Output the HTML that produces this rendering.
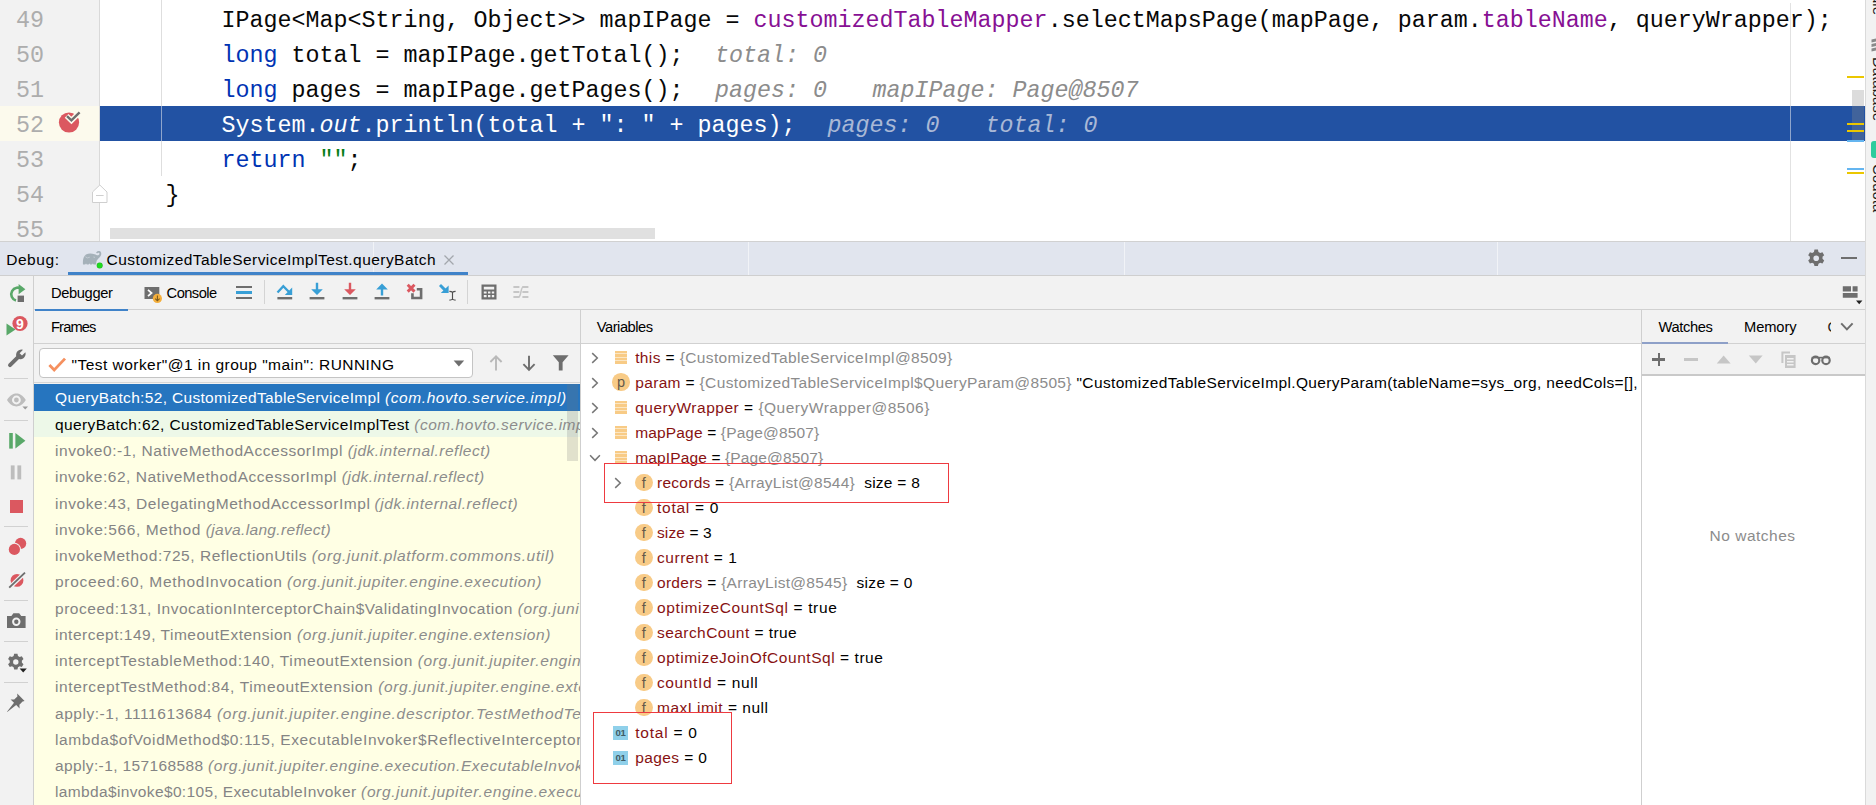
<!DOCTYPE html>
<html><head><meta charset="utf-8"><title>Debug</title>
<style>
html,body{margin:0;padding:0;background:#f2f2f2;}
body{width:1876px;height:805px;position:relative;overflow:hidden;font-family:'Liberation Sans', sans-serif;}
.a{position:absolute;box-sizing:border-box;}
svg.a{overflow:visible;}
</style></head><body>
<div class="a" style="left:0px;top:0px;width:1865px;height:241px;background:#fff;"></div><div class="a" style="left:0px;top:0px;width:99px;height:241px;background:#f2f2f2;"></div><div class="a" style="left:99px;top:0px;width:1px;height:241px;background:#d9d9d9;"></div><div class="a" style="left:0px;top:106px;width:99px;height:35px;background:#fcfaed;"></div><div class="a" style="left:100px;top:106px;width:1765px;height:35px;background:#2252a3;"></div><div class="a" style="left:161px;top:0px;width:1px;height:176px;background:#dedede;"></div><div class="a" style="left:161px;top:106px;width:1px;height:35px;background:#8fa5cc;"></div><div class="a" style="left:1790px;top:3px;width:1px;height:238px;background:#e2e2e2;"></div><div class="a" style="left:1790px;top:106px;width:1px;height:35px;background:#8fa5cc;"></div><div id="t0" style="position:absolute;left:16.00px;top:3.50px;height:35px;line-height:35px;font-family:'Liberation Mono';font-size:23.33px;letter-spacing:0.000px;white-space:pre;color:#adadad;">49</div><div id="t1" style="position:absolute;left:16.00px;top:38.50px;height:35px;line-height:35px;font-family:'Liberation Mono';font-size:23.33px;letter-spacing:0.000px;white-space:pre;color:#adadad;">50</div><div id="t2" style="position:absolute;left:16.00px;top:73.50px;height:35px;line-height:35px;font-family:'Liberation Mono';font-size:23.33px;letter-spacing:0.000px;white-space:pre;color:#adadad;">51</div><div id="t3" style="position:absolute;left:16.00px;top:108.50px;height:35px;line-height:35px;font-family:'Liberation Mono';font-size:23.33px;letter-spacing:0.000px;white-space:pre;color:#adadad;">52</div><div id="t4" style="position:absolute;left:16.00px;top:143.50px;height:35px;line-height:35px;font-family:'Liberation Mono';font-size:23.33px;letter-spacing:0.000px;white-space:pre;color:#adadad;">53</div><div id="t5" style="position:absolute;left:16.00px;top:178.50px;height:35px;line-height:35px;font-family:'Liberation Mono';font-size:23.33px;letter-spacing:0.000px;white-space:pre;color:#adadad;">54</div><div id="t6" style="position:absolute;left:16.00px;top:213.50px;height:35px;line-height:35px;font-family:'Liberation Mono';font-size:23.33px;letter-spacing:0.000px;white-space:pre;color:#adadad;">55</div><div id="t7" style="position:absolute;left:221.60px;top:3.50px;height:35px;line-height:35px;font-family:'Liberation Mono';font-size:23.33px;letter-spacing:0.001px;white-space:pre;color:#080808;">IPage&lt;Map&lt;String, Object&gt;&gt; mapIPage = <span style="color:#871094">customizedTableMapper</span>.selectMapsPage(mapPage, param.<span style="color:#871094">tableName</span>, queryWrapper);</div><div id="t8" style="position:absolute;left:221.60px;top:38.50px;height:35px;line-height:35px;font-family:'Liberation Mono';font-size:23.33px;letter-spacing:0.000px;white-space:pre;color:#080808;"><span style="color:#0033b3">long</span> total = mapIPage.getTotal();</div><div id="t9" style="position:absolute;left:715.00px;top:38.50px;height:35px;line-height:35px;font-family:'Liberation Mono';font-size:23.33px;letter-spacing:0.000px;white-space:pre;"><span style="color:#8c8c8c;font-style:italic">total: 0</span></div><div id="t10" style="position:absolute;left:221.60px;top:73.50px;height:35px;line-height:35px;font-family:'Liberation Mono';font-size:23.33px;letter-spacing:0.000px;white-space:pre;color:#080808;"><span style="color:#0033b3">long</span> pages = mapIPage.getPages();</div><div id="t11" style="position:absolute;left:715.00px;top:73.50px;height:35px;line-height:35px;font-family:'Liberation Mono';font-size:23.33px;letter-spacing:0.000px;white-space:pre;"><span style="color:#8c8c8c;font-style:italic">pages: 0</span></div><div id="t12" style="position:absolute;left:872.50px;top:73.50px;height:35px;line-height:35px;font-family:'Liberation Mono';font-size:23.33px;letter-spacing:0.001px;white-space:pre;"><span style="color:#8c8c8c;font-style:italic">mapIPage: Page@8507</span></div><div id="t13" style="position:absolute;left:221.60px;top:108.50px;height:35px;line-height:35px;font-family:'Liberation Mono';font-size:23.33px;letter-spacing:0.000px;white-space:pre;color:#fff;">System.<span style="font-style:italic">out</span>.println(total + ": " + pages);</div><div id="t14" style="position:absolute;left:827.50px;top:108.50px;height:35px;line-height:35px;font-family:'Liberation Mono';font-size:23.33px;letter-spacing:0.000px;white-space:pre;"><span style="color:#a9b8d6;font-style:italic">pages: 0</span></div><div id="t15" style="position:absolute;left:985.50px;top:108.50px;height:35px;line-height:35px;font-family:'Liberation Mono';font-size:23.33px;letter-spacing:0.000px;white-space:pre;"><span style="color:#a9b8d6;font-style:italic">total: 0</span></div><div id="t16" style="position:absolute;left:221.60px;top:143.50px;height:35px;line-height:35px;font-family:'Liberation Mono';font-size:23.33px;letter-spacing:0.000px;white-space:pre;color:#080808;"><span style="color:#0033b3">return</span> <span style="color:#067d17">""</span>;</div><div id="t17" style="position:absolute;left:165.60px;top:178.50px;height:35px;line-height:35px;font-family:'Liberation Mono';font-size:23.33px;letter-spacing:0.000px;white-space:pre;color:#080808;">}</div><svg class="a" style="left:56px;top:109px;" width="28" height="28" viewBox="0 0 28 28"><circle cx="13" cy="13.5" r="10.1" fill="#db5860"/><path d="M10.6 6.9 L15.4 11.4 L24.2 2.8" fill="none" stroke="#fcfaed" stroke-width="5.4"/><path d="M11 7.2 L15.4 11.3 L23.6 3.4" fill="none" stroke="#6e6e6e" stroke-width="2.4"/></svg><svg class="a" style="left:90px;top:183px;" width="20" height="22" viewBox="0 0 20 22"><path d="M2.5 19.5 V9 L9.8 2 L17 9 V19.5 Z" fill="#fff" stroke="#cfcfcf" stroke-width="1"/><path d="M6 12.5 H13.6" stroke="#cfcfcf" stroke-width="1"/></svg><div class="a" style="left:110px;top:228px;width:545px;height:10.6px;background:#e0e0e0;"></div><div class="a" style="left:1847px;top:76px;width:17px;height:2px;background:#ebc700;"></div><div class="a" style="left:1852px;top:90px;width:12px;height:51px;background:rgba(140,140,140,0.30);"></div><div class="a" style="left:1847px;top:123px;width:17px;height:2px;background:#ebc700;"></div><div class="a" style="left:1847px;top:130px;width:17px;height:2px;background:#ebc700;"></div><div class="a" style="left:1847px;top:140px;width:17px;height:2px;background:#64b5f0;"></div><div class="a" style="left:1847px;top:168px;width:17px;height:2px;background:#64b5f0;"></div><div class="a" style="left:1847px;top:172px;width:17px;height:2px;background:#ebc700;"></div><div class="a" style="left:0px;top:241px;width:1865px;height:1px;background:#d1d1d1;"></div><div class="a" style="left:1865px;top:0px;width:11px;height:805px;background:#f2f2f2;"></div><div class="a" style="left:1865px;top:0px;width:1px;height:805px;background:#dadada;"></div><div class="a" style="left:1870.9px;top:-30px;transform-origin:0 0;transform:rotate(90deg) translate(0,-100%);font:15px 'Liberation Sans', sans-serif;color:#1a1a1a;white-space:pre;line-height:15px;height:15px">Gradle</div><div class="a" style="left:1870.9px;top:57px;transform-origin:0 0;transform:rotate(90deg) translate(0,-100%);font:15px 'Liberation Sans', sans-serif;color:#1a1a1a;white-space:pre;line-height:15px;height:15px">Database</div><div class="a" style="left:1870.9px;top:164px;transform-origin:0 0;transform:rotate(90deg) translate(0,-100%);font:15px 'Liberation Sans', sans-serif;color:#1a1a1a;white-space:pre;line-height:15px;height:15px">Codota</div><svg class="a" style="left:1870px;top:38px;overflow:hidden;" width="6" height="15" viewBox="0 0 6 15"><path d="M1.5 1.5 l4.5 -1 v3 l-4.5 1z M1.5 6 l4.5 -1 v3 l-4.5 1z M1.5 10.5 l4.5 -1 v3 l-4.5 1z" fill="#8a8a8a"/></svg><svg class="a" style="left:1870px;top:141px;overflow:hidden;" width="6" height="17" viewBox="0 0 6 17"><rect x="1" y="0" width="14" height="17" rx="3" fill="#2ecc9d"/></svg><div class="a" style="left:0px;top:242px;width:1865px;height:34px;background:#e1e5ee;"></div><div class="a" style="left:373px;top:242px;width:1px;height:33px;background:rgba(255,255,255,0.55);"></div><div class="a" style="left:748px;top:242px;width:1px;height:33px;background:rgba(255,255,255,0.55);"></div><div class="a" style="left:1124px;top:242px;width:1px;height:33px;background:rgba(255,255,255,0.55);"></div><div class="a" style="left:1497px;top:242px;width:1px;height:33px;background:rgba(255,255,255,0.55);"></div><div id="t18" style="position:absolute;left:6.20px;top:246.50px;height:26px;line-height:26px;font-family:'Liberation Sans', sans-serif;font-size:15.5px;letter-spacing:0.553px;white-space:pre;color:#000;">Debug:</div><svg class="a" style="left:82px;top:247px;" width="24" height="24" viewBox="0 0 24 24"><path d="M1 17.6 C0.6 13 1.2 9.5 4 7.4 C6.5 6 10 6.2 12.5 7.2 C14.2 7.8 15.6 8.6 16.6 8 C17.6 7.4 17.8 6.2 16.8 5.8 C16 5.6 15.4 5.9 15.2 6.4 L14.1 5.7 C14.6 4.4 16 3.7 17.4 4 C19.4 4.5 19.8 7 18.6 9 C17.6 10.8 15.6 12 14.8 13.6 C14.3 14.8 14.2 16 14.2 17.6 L11.6 17.6 L10.8 16.5 L10 17.6 L8.2 17.6 L7.4 16.5 L6.6 17.6 L4.8 17.6 L4 16.5 L3.2 17.6 Z" fill="#a5b1b9"/><path d="M3.4 9.8 Q5.2 11.8 7.8 10.2 M11.4 10 L13 10.4" stroke="#c9d1d8" stroke-width="0.8" fill="none"/><circle cx="17.7" cy="18.6" r="3" fill="#27b327"/><circle cx="17.7" cy="18.6" r="2.5" fill="#1fdb1f"/></svg><div id="t19" style="position:absolute;left:106.50px;top:246.50px;height:26px;line-height:26px;font-family:'Liberation Sans', sans-serif;font-size:15.5px;letter-spacing:0.451px;white-space:pre;color:#000;">CustomizedTableServiceImplTest.queryBatch</div><svg class="a" style="left:443px;top:254px;" width="12" height="12" viewBox="0 0 12 12"><path d="M1.5 1.5 L10.5 10.5 M10.5 1.5 L1.5 10.5" stroke="#a3a7ad" stroke-width="1.3" fill="none"/></svg><div class="a" style="left:68px;top:272px;width:400px;height:3px;background:#4083c9;"></div><svg class="a" style="left:1806px;top:248px;" width="20" height="20" viewBox="0 0 20 20"><g transform="translate(10.2,10.2) scale(1.08)" fill="#6e6e6e"><path d="M-1.6 -8 h3.2 l.5 2.2 a6 6 0 0 1 1.6 .9 l2.1 -.7 1.6 2.8 -1.6 1.5 a6 6 0 0 1 0 1.9 l1.6 1.5 -1.6 2.8 -2.1 -.7 a6 6 0 0 1 -1.6 .9 l-.5 2.2 h-3.2 l-.5 -2.2 a6 6 0 0 1 -1.6 -.9 l-2.1 .7 -1.6 -2.8 1.6 -1.5 a6 6 0 0 1 0 -1.9 l-1.6 -1.5 1.6 -2.8 2.1 .7 a6 6 0 0 1 1.6 -.9 z M0 -2.6 a2.6 2.6 0 1 0 0 5.2 a2.6 2.6 0 1 0 0 -5.2z" fill-rule="evenodd"/></g></svg><div class="a" style="left:1841.4px;top:257px;width:15.2px;height:2.2px;background:#6e6e6e;"></div><div class="a" style="left:0px;top:275px;width:1865px;height:1px;background:#cfcfcf;"></div><div class="a" style="left:0px;top:276px;width:1865px;height:529px;background:#f2f2f2;"></div><div class="a" style="left:34px;top:309px;width:1831px;height:1px;background:#d1d1d1;"></div><div id="t20" style="position:absolute;left:51.00px;top:280.00px;height:26px;line-height:26px;font-family:'Liberation Sans', sans-serif;font-size:14.7px;letter-spacing:-0.377px;white-space:pre;color:#000;">Debugger</div><div class="a" style="left:35px;top:309px;width:93px;height:2px;background:#4083c9;"></div><svg class="a" style="left:143px;top:284px;" width="22" height="22" viewBox="0 0 22 22"><rect x="1.5" y="3" width="14.8" height="12" fill="#6e6e6e"/><path d="M5 5.8 L8.6 9 L5 12.2" stroke="#fff" stroke-width="1.7" fill="none"/><circle cx="14.4" cy="14.4" r="4.6" fill="#f4af3d"/><path d="M14.4 11.6 V16.6 M12.2 14.6 L14.4 16.8 L16.6 14.6" stroke="#7a5a1c" stroke-width="1.1" fill="none"/></svg><div id="t21" style="position:absolute;left:166.60px;top:280.00px;height:26px;line-height:26px;font-family:'Liberation Sans', sans-serif;font-size:14.7px;letter-spacing:-0.556px;white-space:pre;color:#000;">Console</div><div class="a" style="left:236px;top:286px;width:16px;height:2.4px;background:#6e6e6e;"></div><div class="a" style="left:236px;top:291px;width:16px;height:3.4px;background:#389fd6;"></div><div class="a" style="left:236px;top:297px;width:16px;height:2.4px;background:#6e6e6e;"></div><div class="a" style="left:264px;top:280px;width:1px;height:24px;background:#d4d4d4;"></div><svg class="a" style="left:275px;top:282px;" width="20" height="20" viewBox="0 0 20 20"><path d="M2.5 10.5 L8.3 4.2 L15 11" stroke="#389fd6" stroke-width="2.3" fill="none"/><path d="M17.2 5.6 V13 H9.8 Z" fill="#389fd6"/><rect x="2.4" y="15" width="14.8" height="2.4" fill="#6e6e6e"/></svg><svg class="a" style="left:307px;top:282px;" width="20" height="20" viewBox="0 0 20 20"><path d="M8.8 0.8 H11.2 V7.2 H15.8 L10 13 L4.2 7.2 H8.8 Z" fill="#389fd6"/><rect x="2.6" y="15" width="14.8" height="2.4" fill="#6e6e6e"/></svg><svg class="a" style="left:340px;top:282px;" width="20" height="20" viewBox="0 0 20 20"><path d="M8.8 0.8 H11.2 V7.2 H15.8 L10 13 L4.2 7.2 H8.8 Z" fill="#db5860"/><rect x="2.6" y="15" width="14.8" height="2.4" fill="#6e6e6e"/></svg><svg class="a" style="left:372px;top:282px;" width="20" height="20" viewBox="0 0 20 20"><path d="M8.8 13.4 H11.2 V7.4 H15.8 L10 1.4 L4.2 7.4 H8.8 Z" fill="#389fd6"/><rect x="2.6" y="15" width="14.8" height="2.4" fill="#6e6e6e"/></svg><svg class="a" style="left:405px;top:282px;" width="20" height="20" viewBox="0 0 20 20"><path d="M2.7 2.8 L9.5 9.6 M9.5 2.8 L2.7 9.6" stroke="#db5860" stroke-width="2.9" fill="none"/><path d="M11.8 7.3 H16.1 V16 H7.45 V11.3" stroke="#6e6e6e" stroke-width="2.6" fill="none"/></svg><svg class="a" style="left:438px;top:282px;" width="20" height="20" viewBox="0 0 20 20"><path d="M10.6 3.4 V11 H2.8 Z" fill="#389fd6"/><path d="M2 3 L7.6 8.6" stroke="#389fd6" stroke-width="2.9"/><path d="M11.4 9.3 Q13.6 9.3 14.5 10.4 Q15.4 9.3 17.6 9.3 M11.4 18.1 Q13.6 18.1 14.5 17 Q15.4 18.1 17.6 18.1 M14.5 10.2 V17.2" stroke="#4f4f4f" stroke-width="1.15" fill="none"/></svg><div class="a" style="left:467px;top:280px;width:1px;height:24px;background:#d4d4d4;"></div><svg class="a" style="left:480px;top:283px;" width="18" height="18" viewBox="0 0 18 18"><path d="M1.5 1.5 H16.5 V16.5 H1.5 Z M3.8 3.8 V6.6 H14.2 V3.8 Z M3.8 8.4 V10.6 H6.6 V8.4 Z M8 8.4 V10.6 H10.4 V8.4 Z M11.8 8.4 V10.6 H14.2 V8.4 Z M3.8 12 V14.2 H6.6 V12 Z M8 12 V14.2 H10.4 V12 Z M11.8 12 V14.2 H14.2 V12 Z" fill="#6e6e6e" fill-rule="evenodd"/></svg><svg class="a" style="left:512px;top:283px;" width="18" height="18" viewBox="0 0 18 18"><path d="M1.4 4 H7.4 M10.4 4 H16.4 M1.4 9 H7.4 M10.4 9 H16.4 M1.4 14 H7.4 M10.4 14 H16.4" stroke="#c6c6c6" stroke-width="2" fill="none"/><path d="M6.6 14 C9.2 14 8.6 4 11.2 4" stroke="#c6c6c6" stroke-width="1.5" fill="none"/></svg><svg class="a" style="left:1842px;top:285px;" width="20" height="22" viewBox="0 0 20 22"><path d="M0.8 1.2 H9 V6.4 H0.8 Z M10.6 1.2 H15.6 V6.4 H10.6 Z M0.8 8 H15.6 V12.8 H0.8 Z" fill="#6e6e6e"/><path d="M14 15.6 H20.4 L17.2 19.2 Z" fill="#222"/></svg><div class="a" style="left:33px;top:276px;width:1px;height:529px;background:#cfcfcf;"></div><svg class="a" style="left:6px;top:283px;" width="22" height="22" viewBox="0 0 22 22"><path d="M16.2 6.3 A6.6 6.6 0 1 0 10 17.6" stroke="#59a869" stroke-width="2.6" fill="none" transform="translate(0,0)"/><path d="M12.6 1 L19.4 6.2 L12.6 11.2 Z" fill="#59a869"/><rect x="11.6" y="12.6" width="6.4" height="6.4" fill="#6e6e6e"/></svg><svg class="a" style="left:5px;top:314px;" width="24" height="24" viewBox="0 0 24 24"><path d="M1.5 9.5 L10.5 15.5 L1.5 21.5 Z" fill="#59a869"/><circle cx="15" cy="9.5" r="7.6" fill="#db5860"/><text x="15" y="14.6" font-family="Liberation Sans" font-weight="bold" font-size="14" fill="#fff" text-anchor="middle">9</text></svg><svg class="a" style="left:7px;top:348px;" width="20" height="20" viewBox="0 0 20 20"><path d="M18.4 4.2 L15 7.6 L12.6 5.2 L16 1.8 A5.4 5.4 0 0 0 9.2 8.2 L1.6 15.8 A1.9 1.9 0 0 0 4.4 18.6 L12 11 A5.4 5.4 0 0 0 18.4 4.2 Z" fill="#6e6e6e"/></svg><div class="a" style="left:4px;top:378px;width:24px;height:1px;background:#d1d1d1;"></div><svg class="a" style="left:6px;top:391px;" width="24" height="20" viewBox="0 0 24 20"><path d="M1 9 C4 4.2 7.4 2.6 10.4 2.6 C13.4 2.6 16.8 4.2 19.8 9 C16.8 13.8 13.4 15.4 10.4 15.4 C7.4 15.4 4 13.8 1 9 Z M10.4 4.6 A4.4 4.4 0 1 0 10.4 13.4 A4.4 4.4 0 1 0 10.4 4.6 Z" fill="#bdbdbd" fill-rule="evenodd"/><circle cx="10.4" cy="9" r="2.4" fill="#bdbdbd"/><path d="M16.4 15.6 H22 L19.2 18.6 Z" fill="#9a9a9a"/></svg><div class="a" style="left:4px;top:420px;width:24px;height:1px;background:#d1d1d1;"></div><svg class="a" style="left:7px;top:431px;" width="20" height="20" viewBox="0 0 20 20"><rect x="2.2" y="2" width="3.6" height="15.6" fill="#59a869"/><path d="M8.4 2 L18.4 9.8 L8.4 17.6 Z" fill="#59a869"/></svg><svg class="a" style="left:7px;top:463px;" width="20" height="20" viewBox="0 0 20 20"><rect x="3.8" y="2.4" width="3.8" height="14" fill="#bdbdbd"/><rect x="10.4" y="2.4" width="3.8" height="14" fill="#bdbdbd"/></svg><div class="a" style="left:10px;top:500px;width:13px;height:13px;background:#db5860;"></div><div class="a" style="left:4px;top:526px;width:24px;height:1px;background:#d1d1d1;"></div><svg class="a" style="left:6px;top:536px;" width="22" height="22" viewBox="0 0 22 22"><circle cx="14.6" cy="7.4" r="5.6" fill="#db5860"/><circle cx="8.4" cy="13.4" r="6.6" fill="#f2f2f2"/><circle cx="8.4" cy="13.4" r="5.6" fill="#db5860"/></svg><svg class="a" style="left:6px;top:569px;" width="22" height="22" viewBox="0 0 22 22"><circle cx="11" cy="11.4" r="6.4" fill="#db5860"/><path d="M3 19 L19.4 3.4" stroke="#f2f2f2" stroke-width="4.4"/><path d="M3.2 18.6 L19 3.6" stroke="#6e6e6e" stroke-width="1.9"/></svg><div class="a" style="left:4px;top:600px;width:24px;height:1px;background:#d1d1d1;"></div><svg class="a" style="left:6px;top:611px;" width="22" height="20" viewBox="0 0 22 20"><path d="M1 5 H5.4 L7.4 2.2 H13.2 L15.2 5 H19.6 V17 H1 Z M10.3 6.6 A4.2 4.2 0 1 0 10.3 15 A4.2 4.2 0 1 0 10.3 6.6 Z M10.3 8.6 A2.2 2.2 0 1 1 10.3 13 A2.2 2.2 0 1 1 10.3 8.6 Z" fill="#6e6e6e" fill-rule="evenodd"/></svg><div class="a" style="left:4px;top:641px;width:24px;height:1px;background:#d1d1d1;"></div><svg class="a" style="left:5px;top:652px;" width="24" height="22" viewBox="0 0 24 22"><g transform="translate(10.8,10) scale(1.04)" fill="#6e6e6e"><path d="M-1.6 -8 h3.2 l.5 2.2 a6 6 0 0 1 1.6 .9 l2.1 -.7 1.6 2.8 -1.6 1.5 a6 6 0 0 1 0 1.9 l1.6 1.5 -1.6 2.8 -2.1 -.7 a6 6 0 0 1 -1.6 .9 l-.5 2.2 h-3.2 l-.5 -2.2 a6 6 0 0 1 -1.6 -.9 l-2.1 .7 -1.6 -2.8 1.6 -1.5 a6 6 0 0 1 0 -1.9 l-1.6 -1.5 1.6 -2.8 2.1 .7 a6 6 0 0 1 1.6 -.9 z M0 -2.6 a2.6 2.6 0 1 0 0 5.2 a2.6 2.6 0 1 0 0 -5.2z" fill-rule="evenodd"/></g><path d="M14.6 16.6 H21.8 L18.2 20.6 Z" fill="#222"/></svg><div class="a" style="left:4px;top:682px;width:24px;height:1px;background:#d1d1d1;"></div><svg class="a" style="left:5.4px;top:692px;" width="22" height="22" viewBox="0 0 22 22"><path d="M12.2 1.6 L19.6 9 L17.6 9.6 L14.4 12.8 L14.6 16.4 L11.2 13 L2.2 20 L2 19.8 L9 10.8 L5.6 7.4 L9.2 7.6 L12.4 4.4 Z" fill="#6e6e6e"/></svg><div id="t22" style="position:absolute;left:51.00px;top:314.00px;height:26px;line-height:26px;font-family:'Liberation Sans', sans-serif;font-size:14.7px;letter-spacing:-0.864px;white-space:pre;color:#000;">Frames</div><div class="a" style="left:34px;top:343px;width:547px;height:1px;background:#d1d1d1;"></div><div class="a" style="left:39px;top:348px;width:434px;height:30px;background:#fff;border:1px solid #c4c4c4;border-radius:4px"></div><svg class="a" style="left:47px;top:354px;" width="20" height="20" viewBox="0 0 20 20"><path d="M2.4 11 L7.2 16 L18 4.6" stroke="#f5905f" stroke-width="2.8" fill="none"/></svg><div id="t23" style="position:absolute;left:71.60px;top:351.50px;height:26px;line-height:26px;font-family:'Liberation Sans', sans-serif;font-size:15.5px;letter-spacing:0.453px;white-space:pre;color:#000;">"Test worker"@1 in group "main": RUNNING</div><svg class="a" style="left:453px;top:360px;" width="12" height="8" viewBox="0 0 12 8"><path d="M0.6 0.6 H11.2 L5.9 6.6 Z" fill="#6e6e6e"/></svg><svg class="a" style="left:488px;top:354px;" width="16" height="18" viewBox="0 0 16 18"><path d="M8 16.4 V2.6 M2.4 8 L8 2.4 L13.6 8" stroke="#b9b9b9" stroke-width="1.9" fill="none"/></svg><svg class="a" style="left:521px;top:354px;" width="16" height="18" viewBox="0 0 16 18"><path d="M8 1.8 V15.6 M2.4 10.2 L8 15.8 L13.6 10.2" stroke="#6e6e6e" stroke-width="1.9" fill="none"/></svg><svg class="a" style="left:552px;top:354px;" width="18" height="18" viewBox="0 0 18 18"><path d="M0.8 1.2 H16.6 L10.6 8.2 V16.4 H6.8 V8.2 Z" fill="#6e6e6e"/></svg><div class="a" style="left:34px;top:382px;width:547px;height:1px;background:#d6d6d6;"></div><div class="a" style="left:34px;top:384px;width:546px;height:421px;background:#ffffe4;"></div><div class="a" style="left:34px;top:384px;width:546px;height:27px;background:#2675bf;"></div><div class="a" style="left:34px;top:411px;width:546px;height:26px;background:#edf8e8;"></div><div class="a" style="left:34px;top:384px;width:546px;height:421px;overflow:hidden"><div id="t24" style="position:absolute;left:21.00px;top:1.43px;height:26px;line-height:26px;font-family:'Liberation Sans', sans-serif;font-size:15.5px;letter-spacing:0.327px;white-space:pre;color:#fff;">QueryBatch:52, CustomizedTableServiceImpl</div><div id="t25" style="position:absolute;left:351.00px;top:1.43px;height:26px;line-height:26px;font-family:'Liberation Sans', sans-serif;font-size:15.5px;letter-spacing:0.576px;white-space:pre;color:#fff;font-style:italic;">(com.hovto.service.impl)</div><div id="t26" style="position:absolute;left:21.00px;top:27.70px;height:26px;line-height:26px;font-family:'Liberation Sans', sans-serif;font-size:15.5px;letter-spacing:0.392px;white-space:pre;color:#000;">queryBatch:62, CustomizedTableServiceImplTest</div><div id="t27" style="position:absolute;left:380.20px;top:27.70px;height:26px;line-height:26px;font-family:'Liberation Sans', sans-serif;font-size:15.5px;letter-spacing:0.530px;white-space:pre;color:#8c8c8c;font-style:italic;">(com.hovto.service.impl)</div><div id="t28" style="position:absolute;left:21.00px;top:53.98px;height:26px;line-height:26px;font-family:'Liberation Sans', sans-serif;font-size:15.5px;letter-spacing:0.533px;white-space:pre;color:#848484;">invoke0:-1, NativeMethodAccessorImpl</div><div id="t29" style="position:absolute;left:313.80px;top:53.98px;height:26px;line-height:26px;font-family:'Liberation Sans', sans-serif;font-size:15.5px;letter-spacing:0.505px;white-space:pre;color:#8c8c8c;font-style:italic;">(jdk.internal.reflect)</div><div id="t30" style="position:absolute;left:21.00px;top:80.24px;height:26px;line-height:26px;font-family:'Liberation Sans', sans-serif;font-size:15.5px;letter-spacing:0.525px;white-space:pre;color:#848484;">invoke:62, NativeMethodAccessorImpl</div><div id="t31" style="position:absolute;left:307.80px;top:80.24px;height:26px;line-height:26px;font-family:'Liberation Sans', sans-serif;font-size:15.5px;letter-spacing:0.505px;white-space:pre;color:#8c8c8c;font-style:italic;">(jdk.internal.reflect)</div><div id="t32" style="position:absolute;left:21.00px;top:106.51px;height:26px;line-height:26px;font-family:'Liberation Sans', sans-serif;font-size:15.5px;letter-spacing:0.554px;white-space:pre;color:#848484;">invoke:43, DelegatingMethodAccessorImpl</div><div id="t33" style="position:absolute;left:340.60px;top:106.51px;height:26px;line-height:26px;font-family:'Liberation Sans', sans-serif;font-size:15.5px;letter-spacing:0.537px;white-space:pre;color:#8c8c8c;font-style:italic;">(jdk.internal.reflect)</div><div id="t34" style="position:absolute;left:21.00px;top:132.79px;height:26px;line-height:26px;font-family:'Liberation Sans', sans-serif;font-size:15.5px;letter-spacing:0.595px;white-space:pre;color:#848484;">invoke:566, Method</div><div id="t35" style="position:absolute;left:171.80px;top:132.79px;height:26px;line-height:26px;font-family:'Liberation Sans', sans-serif;font-size:15.5px;letter-spacing:0.332px;white-space:pre;color:#8c8c8c;font-style:italic;">(java.lang.reflect)</div><div id="t36" style="position:absolute;left:21.00px;top:159.06px;height:26px;line-height:26px;font-family:'Liberation Sans', sans-serif;font-size:15.5px;letter-spacing:0.535px;white-space:pre;color:#848484;">invokeMethod:725, ReflectionUtils</div><div id="t37" style="position:absolute;left:277.80px;top:159.06px;height:26px;line-height:26px;font-family:'Liberation Sans', sans-serif;font-size:15.5px;letter-spacing:0.658px;white-space:pre;color:#8c8c8c;font-style:italic;">(org.junit.platform.commons.util)</div><div id="t38" style="position:absolute;left:21.00px;top:185.32px;height:26px;line-height:26px;font-family:'Liberation Sans', sans-serif;font-size:15.5px;letter-spacing:0.681px;white-space:pre;color:#848484;">proceed:60, MethodInvocation</div><div id="t39" style="position:absolute;left:253.10px;top:185.32px;height:26px;line-height:26px;font-family:'Liberation Sans', sans-serif;font-size:15.5px;letter-spacing:0.610px;white-space:pre;color:#8c8c8c;font-style:italic;">(org.junit.jupiter.engine.execution)</div><div id="t40" style="position:absolute;left:21.00px;top:211.59px;height:26px;line-height:26px;font-family:'Liberation Sans', sans-serif;font-size:15.5px;letter-spacing:0.529px;white-space:pre;color:#848484;">proceed:131, InvocationInterceptorChain$ValidatingInvocation</div><div id="t41" style="position:absolute;left:483.80px;top:211.59px;height:26px;line-height:26px;font-family:'Liberation Sans', sans-serif;font-size:15.5px;letter-spacing:0.620px;white-space:pre;color:#8c8c8c;font-style:italic;">(org.junit.jupiter.engine.execution)</div><div id="t42" style="position:absolute;left:21.00px;top:237.87px;height:26px;line-height:26px;font-family:'Liberation Sans', sans-serif;font-size:15.5px;letter-spacing:0.508px;white-space:pre;color:#848484;">intercept:149, TimeoutExtension</div><div id="t43" style="position:absolute;left:263.00px;top:237.87px;height:26px;line-height:26px;font-family:'Liberation Sans', sans-serif;font-size:15.5px;letter-spacing:0.585px;white-space:pre;color:#8c8c8c;font-style:italic;">(org.junit.jupiter.engine.extension)</div><div id="t44" style="position:absolute;left:21.00px;top:264.14px;height:26px;line-height:26px;font-family:'Liberation Sans', sans-serif;font-size:15.5px;letter-spacing:0.603px;white-space:pre;color:#848484;">interceptTestableMethod:140, TimeoutExtension</div><div id="t45" style="position:absolute;left:383.80px;top:264.14px;height:26px;line-height:26px;font-family:'Liberation Sans', sans-serif;font-size:15.5px;letter-spacing:0.620px;white-space:pre;color:#8c8c8c;font-style:italic;">(org.junit.jupiter.engine.extension)</div><div id="t46" style="position:absolute;left:21.00px;top:290.41px;height:26px;line-height:26px;font-family:'Liberation Sans', sans-serif;font-size:15.5px;letter-spacing:0.636px;white-space:pre;color:#848484;">interceptTestMethod:84, TimeoutExtension</div><div id="t47" style="position:absolute;left:344.20px;top:290.41px;height:26px;line-height:26px;font-family:'Liberation Sans', sans-serif;font-size:15.5px;letter-spacing:0.620px;white-space:pre;color:#8c8c8c;font-style:italic;">(org.junit.jupiter.engine.extension)</div><div id="t48" style="position:absolute;left:21.00px;top:316.68px;height:26px;line-height:26px;font-family:'Liberation Sans', sans-serif;font-size:15.5px;letter-spacing:0.534px;white-space:pre;color:#848484;">apply:-1, 1111613684</div><div id="t49" style="position:absolute;left:183.00px;top:316.68px;height:26px;line-height:26px;font-family:'Liberation Sans', sans-serif;font-size:15.5px;letter-spacing:0.700px;white-space:pre;color:#8c8c8c;font-style:italic;">(org.junit.jupiter.engine.descriptor.TestMethodTestDescriptor)</div><div id="t50" style="position:absolute;left:21.00px;top:342.94px;height:26px;line-height:26px;font-family:'Liberation Sans', sans-serif;font-size:15.5px;letter-spacing:0.600px;white-space:pre;color:#848484;">lambda$ofVoidMethod$0:115, ExecutableInvoker$ReflectiveInterceptorCall</div><div id="t51" style="position:absolute;left:21.00px;top:369.21px;height:26px;line-height:26px;font-family:'Liberation Sans', sans-serif;font-size:15.5px;letter-spacing:0.377px;white-space:pre;color:#848484;">apply:-1, 157168588</div><div id="t52" style="position:absolute;left:174.00px;top:369.21px;height:26px;line-height:26px;font-family:'Liberation Sans', sans-serif;font-size:15.5px;letter-spacing:0.580px;white-space:pre;color:#8c8c8c;font-style:italic;">(org.junit.jupiter.engine.execution.ExecutableInvoker$ReflectiveInterceptorCall$$Lambda$255)</div><div id="t53" style="position:absolute;left:21.00px;top:395.48px;height:26px;line-height:26px;font-family:'Liberation Sans', sans-serif;font-size:15.5px;letter-spacing:0.358px;white-space:pre;color:#848484;">lambda$invoke$0:105, ExecutableInvoker</div><div id="t54" style="position:absolute;left:327.10px;top:395.48px;height:26px;line-height:26px;font-family:'Liberation Sans', sans-serif;font-size:15.5px;letter-spacing:0.620px;white-space:pre;color:#8c8c8c;font-style:italic;">(org.junit.jupiter.engine.execution)</div></div><div class="a" style="left:567px;top:384px;width:11px;height:77px;background:rgba(120,120,120,0.22);"></div><div class="a" style="left:580px;top:310px;width:1px;height:495px;background:#cfcfcf;"></div><div class="a" style="left:581px;top:344px;width:1061px;height:461px;background:#fff;"></div><div id="t55" style="position:absolute;left:596.80px;top:314.00px;height:26px;line-height:26px;font-family:'Liberation Sans', sans-serif;font-size:14.7px;letter-spacing:-0.482px;white-space:pre;color:#000;">Variables</div><div class="a" style="left:581px;top:343px;width:1284px;height:1px;background:#d1d1d1;"></div><svg class="a" style="left:590.8px;top:351.7px;" width="8" height="12" viewBox="0 0 8 12"><path d="M1.2 1.1 L6.3 6 L1.2 10.9" stroke="#767676" stroke-width="1.5" fill="none"/></svg><div class="a" style="left:614.6px;top:350.6px;width:12.4px;height:13.5px;background:#fbe6c4;"></div><div class="a" style="left:614.6px;top:350.6px;width:12.4px;height:2.7px;background:#f8cb86;"></div><div class="a" style="left:614.6px;top:354.20000000000005px;width:12.4px;height:2.7px;background:#f8cb86;"></div><div class="a" style="left:614.6px;top:357.8px;width:12.4px;height:2.7px;background:#f8cb86;"></div><div class="a" style="left:614.6px;top:361.40000000000003px;width:12.4px;height:2.7px;background:#f8cb86;"></div><div id="t56" style="position:absolute;left:635.20px;top:345.20px;height:25px;line-height:25px;font-family:'Liberation Sans', sans-serif;font-size:15.5px;letter-spacing:0.379px;white-space:pre;"><span style="color:#871212">this</span><span style="color:#000"> = </span><span style="color:#8c8c8c">{CustomizedTableServiceImpl@8509}</span></div><svg class="a" style="left:590.8px;top:376.7px;" width="8" height="12" viewBox="0 0 8 12"><path d="M1.2 1.1 L6.3 6 L1.2 10.9" stroke="#767676" stroke-width="1.5" fill="none"/></svg><div class="a" style="left:612.3000000000001px;top:373.4px;width:17.6px;height:17.6px;border-radius:50%;background:#f8cb87"></div><div class="a" style="left:612.5px;top:373.9px;width:17.2px;height:17.2px;text-align:center;font:14.5px 'Liberation Sans', sans-serif;line-height:17.2px;color:#64594a">p</div><div id="t57" style="position:absolute;left:635.20px;top:370.20px;height:25px;line-height:25px;font-family:'Liberation Sans', sans-serif;font-size:15.5px;letter-spacing:0.349px;white-space:pre;"><span style="color:#871212">param</span><span style="color:#000"> = </span><span style="color:#8c8c8c">{CustomizedTableServiceImpl$QueryParam@8505}</span><span style="color:#000"> "CustomizedTableServiceImpl.QueryParam(tableName=sys_org, needCols=[],</span></div><svg class="a" style="left:590.8px;top:401.7px;" width="8" height="12" viewBox="0 0 8 12"><path d="M1.2 1.1 L6.3 6 L1.2 10.9" stroke="#767676" stroke-width="1.5" fill="none"/></svg><div class="a" style="left:614.6px;top:400.6px;width:12.4px;height:13.5px;background:#fbe6c4;"></div><div class="a" style="left:614.6px;top:400.6px;width:12.4px;height:2.7px;background:#f8cb86;"></div><div class="a" style="left:614.6px;top:404.20000000000005px;width:12.4px;height:2.7px;background:#f8cb86;"></div><div class="a" style="left:614.6px;top:407.8px;width:12.4px;height:2.7px;background:#f8cb86;"></div><div class="a" style="left:614.6px;top:411.40000000000003px;width:12.4px;height:2.7px;background:#f8cb86;"></div><div id="t58" style="position:absolute;left:635.20px;top:395.20px;height:25px;line-height:25px;font-family:'Liberation Sans', sans-serif;font-size:15.5px;letter-spacing:0.505px;white-space:pre;"><span style="color:#871212">queryWrapper</span><span style="color:#000"> = </span><span style="color:#8c8c8c">{QueryWrapper@8506}</span></div><svg class="a" style="left:590.8px;top:426.7px;" width="8" height="12" viewBox="0 0 8 12"><path d="M1.2 1.1 L6.3 6 L1.2 10.9" stroke="#767676" stroke-width="1.5" fill="none"/></svg><div class="a" style="left:614.6px;top:425.6px;width:12.4px;height:13.5px;background:#fbe6c4;"></div><div class="a" style="left:614.6px;top:425.6px;width:12.4px;height:2.7px;background:#f8cb86;"></div><div class="a" style="left:614.6px;top:429.20000000000005px;width:12.4px;height:2.7px;background:#f8cb86;"></div><div class="a" style="left:614.6px;top:432.8px;width:12.4px;height:2.7px;background:#f8cb86;"></div><div class="a" style="left:614.6px;top:436.40000000000003px;width:12.4px;height:2.7px;background:#f8cb86;"></div><div id="t59" style="position:absolute;left:635.20px;top:420.20px;height:25px;line-height:25px;font-family:'Liberation Sans', sans-serif;font-size:15.5px;letter-spacing:0.161px;white-space:pre;"><span style="color:#871212">mapPage</span><span style="color:#000"> = </span><span style="color:#8c8c8c">{Page@8507}</span></div><svg class="a" style="left:589px;top:454.1px;" width="12" height="8" viewBox="0 0 12 8"><path d="M1.1 1.2 L6 6.3 L10.9 1.2" stroke="#767676" stroke-width="1.5" fill="none"/></svg><div class="a" style="left:614.6px;top:450.6px;width:12.4px;height:13.5px;background:#fbe6c4;"></div><div class="a" style="left:614.6px;top:450.6px;width:12.4px;height:2.7px;background:#f8cb86;"></div><div class="a" style="left:614.6px;top:454.20000000000005px;width:12.4px;height:2.7px;background:#f8cb86;"></div><div class="a" style="left:614.6px;top:457.8px;width:12.4px;height:2.7px;background:#f8cb86;"></div><div class="a" style="left:614.6px;top:461.40000000000003px;width:12.4px;height:2.7px;background:#f8cb86;"></div><div id="t60" style="position:absolute;left:635.20px;top:445.20px;height:25px;line-height:25px;font-family:'Liberation Sans', sans-serif;font-size:15.5px;letter-spacing:0.135px;white-space:pre;"><span style="color:#871212">mapIPage</span><span style="color:#000"> = </span><span style="color:#8c8c8c">{Page@8507}</span></div><div class="a" style="left:635.0px;top:498.7px;width:17.6px;height:17.6px;border-radius:50%;background:#f8cb87"></div><div class="a" style="left:635.1999999999999px;top:500.09999999999997px;width:17.2px;height:17.2px;text-align:center;font:14.5px 'Liberation Sans', sans-serif;line-height:17.2px;color:#64594a">f</div><div id="t61" style="position:absolute;left:657.00px;top:495.20px;height:25px;line-height:25px;font-family:'Liberation Sans', sans-serif;font-size:15.5px;letter-spacing:0.732px;white-space:pre;"><span style="color:#871212">total</span><span style="color:#000"> = 0</span></div><div class="a" style="left:635.0px;top:523.7px;width:17.6px;height:17.6px;border-radius:50%;background:#f8cb87"></div><div class="a" style="left:635.1999999999999px;top:525.1px;width:17.2px;height:17.2px;text-align:center;font:14.5px 'Liberation Sans', sans-serif;line-height:17.2px;color:#64594a">f</div><div id="t62" style="position:absolute;left:657.00px;top:520.20px;height:25px;line-height:25px;font-family:'Liberation Sans', sans-serif;font-size:15.5px;letter-spacing:0.116px;white-space:pre;"><span style="color:#871212">size</span><span style="color:#000"> = 3</span></div><div class="a" style="left:635.0px;top:548.7px;width:17.6px;height:17.6px;border-radius:50%;background:#f8cb87"></div><div class="a" style="left:635.1999999999999px;top:550.1px;width:17.2px;height:17.2px;text-align:center;font:14.5px 'Liberation Sans', sans-serif;line-height:17.2px;color:#64594a">f</div><div id="t63" style="position:absolute;left:657.00px;top:545.20px;height:25px;line-height:25px;font-family:'Liberation Sans', sans-serif;font-size:15.5px;letter-spacing:0.532px;white-space:pre;"><span style="color:#871212">current</span><span style="color:#000"> = 1</span></div><div class="a" style="left:635.0px;top:573.7px;width:17.6px;height:17.6px;border-radius:50%;background:#f8cb87"></div><div class="a" style="left:635.1999999999999px;top:575.1px;width:17.2px;height:17.2px;text-align:center;font:14.5px 'Liberation Sans', sans-serif;line-height:17.2px;color:#64594a">f</div><div id="t64" style="position:absolute;left:657.00px;top:570.20px;height:25px;line-height:25px;font-family:'Liberation Sans', sans-serif;font-size:15.5px;letter-spacing:0.283px;white-space:pre;"><span style="color:#871212">orders</span><span style="color:#000"> = </span><span style="color:#8c8c8c">{ArrayList@8545}</span><span style="color:#000">  size = 0</span></div><div class="a" style="left:635.0px;top:598.7px;width:17.6px;height:17.6px;border-radius:50%;background:#f8cb87"></div><div class="a" style="left:635.1999999999999px;top:600.1px;width:17.2px;height:17.2px;text-align:center;font:14.5px 'Liberation Sans', sans-serif;line-height:17.2px;color:#64594a">f</div><div id="t65" style="position:absolute;left:657.00px;top:595.20px;height:25px;line-height:25px;font-family:'Liberation Sans', sans-serif;font-size:15.5px;letter-spacing:0.632px;white-space:pre;"><span style="color:#871212">optimizeCountSql</span><span style="color:#000"> = true</span></div><div class="a" style="left:635.0px;top:623.7px;width:17.6px;height:17.6px;border-radius:50%;background:#f8cb87"></div><div class="a" style="left:635.1999999999999px;top:625.1px;width:17.2px;height:17.2px;text-align:center;font:14.5px 'Liberation Sans', sans-serif;line-height:17.2px;color:#64594a">f</div><div id="t66" style="position:absolute;left:657.00px;top:620.20px;height:25px;line-height:25px;font-family:'Liberation Sans', sans-serif;font-size:15.5px;letter-spacing:0.435px;white-space:pre;"><span style="color:#871212">searchCount</span><span style="color:#000"> = true</span></div><div class="a" style="left:635.0px;top:648.7px;width:17.6px;height:17.6px;border-radius:50%;background:#f8cb87"></div><div class="a" style="left:635.1999999999999px;top:650.1px;width:17.2px;height:17.2px;text-align:center;font:14.5px 'Liberation Sans', sans-serif;line-height:17.2px;color:#64594a">f</div><div id="t67" style="position:absolute;left:657.00px;top:645.20px;height:25px;line-height:25px;font-family:'Liberation Sans', sans-serif;font-size:15.5px;letter-spacing:0.543px;white-space:pre;"><span style="color:#871212">optimizeJoinOfCountSql</span><span style="color:#000"> = true</span></div><div class="a" style="left:635.0px;top:673.7px;width:17.6px;height:17.6px;border-radius:50%;background:#f8cb87"></div><div class="a" style="left:635.1999999999999px;top:675.1px;width:17.2px;height:17.2px;text-align:center;font:14.5px 'Liberation Sans', sans-serif;line-height:17.2px;color:#64594a">f</div><div id="t68" style="position:absolute;left:657.00px;top:670.20px;height:25px;line-height:25px;font-family:'Liberation Sans', sans-serif;font-size:15.5px;letter-spacing:0.617px;white-space:pre;"><span style="color:#871212">countId</span><span style="color:#000"> = null</span></div><div class="a" style="left:635.0px;top:698.7px;width:17.6px;height:17.6px;border-radius:50%;background:#f8cb87"></div><div class="a" style="left:635.1999999999999px;top:700.1px;width:17.2px;height:17.2px;text-align:center;font:14.5px 'Liberation Sans', sans-serif;line-height:17.2px;color:#64594a">f</div><div id="t69" style="position:absolute;left:657.00px;top:695.20px;height:25px;line-height:25px;font-family:'Liberation Sans', sans-serif;font-size:15.5px;letter-spacing:0.512px;white-space:pre;"><span style="color:#871212">maxLimit</span><span style="color:#000"> = null</span></div><div class="a" style="left:604px;top:463px;width:345px;height:40px;border:1.2px solid #ee3a40"></div><svg class="a" style="left:613.9px;top:476.7px;" width="8" height="12" viewBox="0 0 8 12"><path d="M1.2 1.1 L6.3 6 L1.2 10.9" stroke="#767676" stroke-width="1.5" fill="none"/></svg><div class="a" style="left:635.0px;top:473.7px;width:17.6px;height:17.6px;border-radius:50%;background:#f8cb87"></div><div class="a" style="left:635.1999999999999px;top:475.09999999999997px;width:17.2px;height:17.2px;text-align:center;font:14.5px 'Liberation Sans', sans-serif;line-height:17.2px;color:#64594a">f</div><div id="t70" style="position:absolute;left:657.00px;top:470.20px;height:25px;line-height:25px;font-family:'Liberation Sans', sans-serif;font-size:15.5px;letter-spacing:0.265px;white-space:pre;"><span style="color:#871212">records</span><span style="color:#000"> = </span><span style="color:#8c8c8c">{ArrayList@8544}</span><span style="color:#000">  size = 8</span></div><div class="a" style="left:593px;top:712px;width:139px;height:72px;border:1.2px solid #ee3a40"></div><div class="a" style="left:613.3px;top:725.5px;width:15px;height:14.6px;background:#8fd0ea;"></div><div class="a" style="left:613.1px;top:725.1px;width:15px;height:15px;text-align:center;font:bold 9.6px 'Liberation Sans', sans-serif;line-height:15px;letter-spacing:-0.3px;color:#3f5c66">01</div><div id="t71" style="position:absolute;left:635.20px;top:720.20px;height:25px;line-height:25px;font-family:'Liberation Sans', sans-serif;font-size:15.5px;letter-spacing:0.777px;white-space:pre;"><span style="color:#871212">total</span><span style="color:#000"> = 0</span></div><div class="a" style="left:613.3px;top:750.5px;width:15px;height:14.6px;background:#8fd0ea;"></div><div class="a" style="left:613.1px;top:750.1px;width:15px;height:15px;text-align:center;font:bold 9.6px 'Liberation Sans', sans-serif;line-height:15px;letter-spacing:-0.3px;color:#3f5c66">01</div><div id="t72" style="position:absolute;left:635.20px;top:745.20px;height:25px;line-height:25px;font-family:'Liberation Sans', sans-serif;font-size:15.5px;letter-spacing:0.408px;white-space:pre;"><span style="color:#871212">pages</span><span style="color:#000"> = 0</span></div><div class="a" style="left:1641px;top:310px;width:1px;height:495px;background:#cfcfcf;"></div><div class="a" style="left:1642px;top:375px;width:223px;height:430px;background:#fff;"></div><div id="t73" style="position:absolute;left:1658.60px;top:314.00px;height:26px;line-height:26px;font-family:'Liberation Sans', sans-serif;font-size:14.7px;letter-spacing:-0.385px;white-space:pre;color:#000;">Watches</div><div id="t74" style="position:absolute;left:1744.00px;top:314.00px;height:26px;line-height:26px;font-family:'Liberation Sans', sans-serif;font-size:14.7px;letter-spacing:-0.091px;white-space:pre;color:#000;">Memory</div><div class="a" style="left:1827.4px;top:315px;width:3.4px;height:24px;overflow:hidden;font:14.7px 'Liberation Sans', sans-serif;line-height:24px;color:#222">O</div><svg class="a" style="left:1840px;top:322px;" width="14" height="10" viewBox="0 0 14 10"><path d="M1.2 1.4 L6.9 7.4 L12.6 1.4" stroke="#6e6e6e" stroke-width="2" fill="none"/></svg><div class="a" style="left:1642px;top:342px;width:86px;height:2px;background:#8ea0c8;"></div><div class="a" style="left:1642px;top:374px;width:223px;height:2px;background:#c9c9c9;"></div><div class="a" style="left:1652.4px;top:358.4px;width:13px;height:2.8px;background:#6e6e6e;"></div><div class="a" style="left:1657.5px;top:353.3px;width:2.8px;height:13px;background:#6e6e6e;"></div><div class="a" style="left:1684px;top:358.4px;width:13.5px;height:2.8px;background:#c6c6c6;"></div><svg class="a" style="left:1716px;top:353px;" width="16" height="12" viewBox="0 0 16 12"><path d="M0.8 10.4 L7.6 2.4 L14.6 10.4 Z" fill="#c6c6c6"/></svg><svg class="a" style="left:1748px;top:354px;" width="16" height="12" viewBox="0 0 16 12"><path d="M0.8 1.6 L7.8 9.6 L14.6 1.6 Z" fill="#c6c6c6"/></svg><svg class="a" style="left:1780px;top:350px;" width="18" height="20" viewBox="0 0 18 20"><path d="M1.4 1.6 H10 V3.4 H3.4 V13 H1.4 Z" fill="#c6c6c6"/><path d="M5 5 H15.6 V18 H5 Z M7 8 V9.6 H13.6 V8 Z M7 11 V12.6 H13.6 V11 Z M7 14 V15.6 H13.6 V14 Z" fill="#c6c6c6" fill-rule="evenodd"/></svg><svg class="a" style="left:1810px;top:353px;" width="22" height="14" viewBox="0 0 22 14"><circle cx="5.6" cy="7.4" r="3.7" stroke="#6e6e6e" stroke-width="2.2" fill="none"/><circle cx="16" cy="7.4" r="3.7" stroke="#6e6e6e" stroke-width="2.2" fill="none"/><path d="M1.6 4.6 H20" stroke="#6e6e6e" stroke-width="1.6"/></svg><div id="t75" style="position:absolute;left:1709.60px;top:522.50px;height:26px;line-height:26px;font-family:'Liberation Sans', sans-serif;font-size:15.5px;letter-spacing:0.502px;white-space:pre;color:#8c8c8c;">No watches</div>
</body></html>
